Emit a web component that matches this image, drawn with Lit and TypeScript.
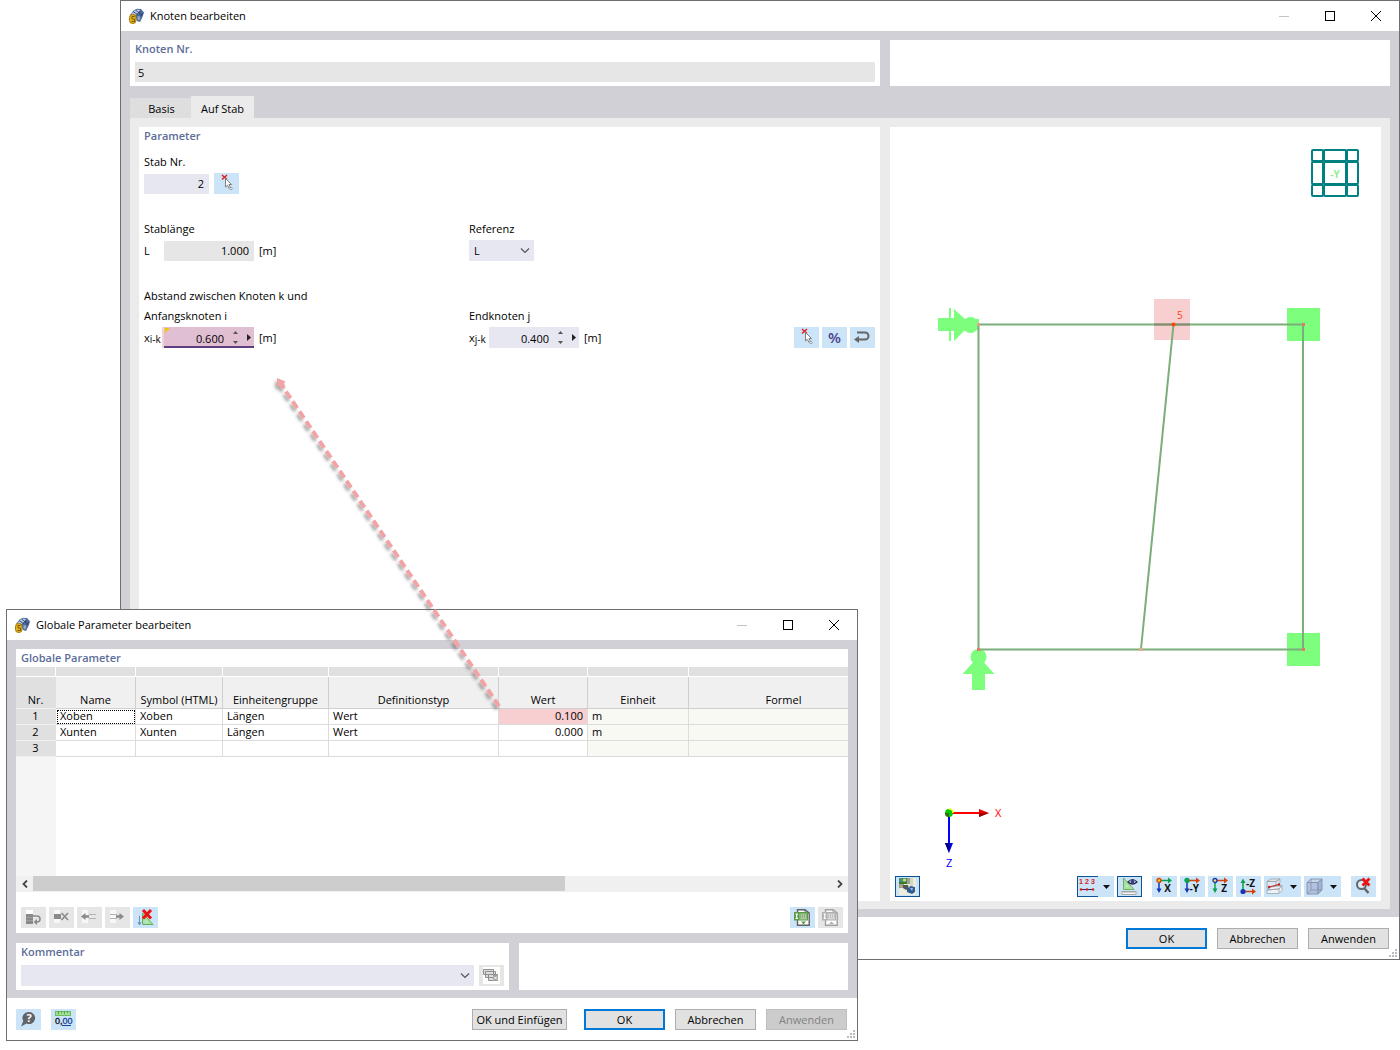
import { LitElement, html, svg, css, TemplateResult } from "lit";
import { customElement, property } from "lit/decorators.js";
import { classMap } from "lit/directives/class-map.js";

const icon = (body: unknown, w = 17, h = 17) =>
  html`<svg class="icon" width=${w} height=${h} viewBox="0 0 ${w} ${h}" overflow="visible" aria-hidden="true">${body}</svg>`;

/* ---------- icons ---------- */

const appIcon = icon(svg`
  <path d="M2 7 L5.500 2.500 L9 .8 L13 1 L16 4.500 L14.500 9 L12 14 L9 13 L7 8z" fill="#4a6a9e"/>
  <path d="M3 6.500 L6.500 2.500 L10 1.500 L12.500 2.500 L8.500 7z" fill="#b4c7e2"/>
  <path d="M5 3.500l4.500 3M7.500 2l4.500 3.500M12.500 2.500l-4 4.500M15 5l-4 5M11 4l3 4" stroke="#2b3f66" stroke-width=".8"/>
  <path d="M9.500 8l3 .5-1 4-2-1z" fill="#8fa9d0"/>
  <rect x="1.500" y="6.500" width="6.500" height="9" rx="3" fill="#e3b21c" stroke="#a87c0c"/>
  <path d="M6.500 8.500H4v2.500h2.500v2.500H3.500" fill="none" stroke="#7a5a08"/>`);

const pickIcon = icon(svg`
  <path d="M4 0l5 4.500M9 0L4 4.500" stroke="#e02020" stroke-width="1.500"/>
  <path d="M7.500 3.500v8.500l2-1.800 1.500 3.300 1.500-.8-1.500-3.200h2.500z" fill="#fff" stroke="#808080"/>
  <circle cx="13" cy="13.500" r="1.200" fill="#fff" stroke="#888" stroke-width=".8"/>`);

const returnIcon = icon(svg`
  <path d="M3 3.500h8a3.500 3.500 0 0 1 0 7H4" fill="none" stroke="#666" stroke-width="2"/>
  <path d="M0 10.500l5-3.500v7z" fill="#666"/>`);

const renderIcon = icon(svg`
  <rect width="17" height="17" fill="#eceedd"/>
  <rect width="8" height="6" fill="#3f8f8a"/><path d="M0 4h8v2H0z" fill="#3d7a24"/><circle cx="5.500" cy="2" r="1.600" fill="#f0d840"/>
  <path d="M8 0h3v6H8zM0 6h5v4H0z" fill="#a0a088"/><path d="M11 0h3v10h-3z" fill="#d2d8c8"/>
  <path d="M4 7h5l1 4-3 1-3-2z" fill="#555"/><path d="M8 9l2 1 1-2 5 1v5l-3 2-5-2z" fill="#2f5c96"/><path d="M11 10h3l-1 3z" fill="#9fc0e6"/>`);

const numberingIcon = icon(svg`
  <text x="0" y="6" font-size="7" font-weight="700" fill="#e02020" font-family="Liberation Sans, sans-serif">1</text>
  <text x="6" y="6" font-size="7" font-weight="700" fill="#e02020" font-family="Liberation Sans, sans-serif">2</text>
  <text x="12" y="6" font-size="7" font-weight="700" fill="#e02020" font-family="Liberation Sans, sans-serif">3</text>
  <path d="M1 11.500h14" stroke="#1c2a6e"/>
  <circle cx="2" cy="11.500" r="1.300" fill="#e02020"/><circle cx="8" cy="11.500" r="1.300" fill="#e02020"/><circle cx="14" cy="11.500" r="1.300" fill="#e02020"/>`);

const visibilityIcon = icon(svg`
  <path d="M2.500 0v11.500H13z" fill="#a8e39c" stroke="#6fae6a"/><path d="M5 6.500v2.500h2.500z" fill="#cbe4f8"/>
  <rect x="1" y="13.500" width="14" height="3" fill="#f4f4f4" stroke="#999" stroke-width=".8"/><path d="M3 13v2M5 13v2M7 13v2M9 13v2M11 13v2M13 13v2" stroke="#999" stroke-width=".8"/>
  <path d="M7 4q4.500-5 9 0q-4.500 4-9 0z" fill="#fff" stroke="#2a2a50" stroke-width="1.200"/><circle cx="11.500" cy="3.800" r="2" fill="#2f3f8a"/>`);

const axisIcon = (label: string, dot: string, right: string, down: string, fill: string) => icon(svg`
  <path d="M4 2.500h9" stroke=${right} stroke-width="1.500"/><path d="M12-.5l4 3-4 3z" fill=${right}/>
  <path d="M3 4v8" stroke=${down} stroke-width="1.500"/><path d="M.5 10.500h5L3 15z" fill=${down}/>
  <circle cx="3" cy="2.500" r="2" fill=${fill} stroke=${dot} stroke-width="1.300"/>
  <text x="15" y="14" text-anchor="end" font-size="10" font-weight="700" fill="#111" font-family="Open Sans, sans-serif">${label}</text>`);

const axisUpIcon = icon(svg`
  <path d="M3 4v8" stroke="#0da050" stroke-width="1.500"/><path d="M.5 5h5L3 .5z" fill="#0da050"/>
  <path d="M5 13.500h8" stroke="#d4410c" stroke-width="1.500"/><path d="M12 10.500l4 3-4 3z" fill="#d4410c"/>
  <circle cx="3" cy="13.500" r="2.600" fill="#1636b8"/>
  <text x="15" y="9" text-anchor="end" font-size="10" font-weight="700" fill="#111" font-family="Open Sans, sans-serif">-Z</text>`);

const sectionIcon = icon(svg`
  <path d="M1 3.500L5 1h9l-4 2.500zM1 3.500h9v4l-9 3zM10 3.500L14 1v4l-4 2.500" fill="#dfe8ef" stroke="#9aa4ad" stroke-width=".8"/>
  <path d="M1 12l4-3 11-1.500-3 3.500zM1 12l12-1v4.500H1zM13 11l3-3.500v5l-3 3" fill="#eef2f5" stroke="#9aa4ad" stroke-width=".8"/>
  <path d="M3 9l10-2.500" stroke="#c02828" stroke-width="1.200"/><circle cx="3" cy="9" r="1.200" fill="#c02828"/><circle cx="13" cy="6.500" r="1.200" fill="#c02828"/>`);

const cubeIcon = icon(svg`
  <path d="M1 4.500L5 1h11l-4 3.500z" fill="#c8d6ea" stroke="#8791a8" stroke-width=".9"/>
  <path d="M1 4.500h11V16H1z" fill="#b1c2e0" stroke="#8791a8" stroke-width=".9"/>
  <path d="M12 4.500L16 1v11l-4 4z" fill="#a2b4d6" stroke="#8791a8" stroke-width=".9"/>
  <path d="M5 1v11h11M5 12l-4 4" fill="none" stroke="#8791a8" stroke-width=".8"/>`);

const resetZoomIcon = icon(svg`
  <circle cx="6.500" cy="6.500" r="4.500" fill="#dcecf8" stroke="#666" stroke-width="2"/>
  <path d="M9.500 10.500l4 4.500" stroke="#666" stroke-width="2.500"/>
  <path d="M7.500.5l7 7M14.500.5l-7 7" stroke="#f01010" stroke-width="2.800"/>`);

const rowReturnIcon = icon(svg`
  <path d="M1 1h7v4H1z" fill="#fff"/><rect x="1" y="5" width="7" height="10" fill="#8a8a8a"/><path d="M1 8.500h7M1 11.500h7" stroke="#9d9d9d"/>
  <path d="M8 7h4a3 3 0 0 1 0 6h-1" fill="none" stroke="#8a8a8a" stroke-width="1.500"/><path d="M12 10v6l-3.500-3z" fill="#8a8a8a"/>`);
const rowDeleteIcon = icon(svg`
  <path d="M1 1h6v13H1z" fill="#f7f7f7"/><rect x="1" y="5" width="7" height="5" fill="#8a8a8a"/><path d="M8.500 4l6.500 7M15 4l-6.500 7" stroke="#8a8a8a" stroke-width="1.600"/>`);
const rowLeftIcon = icon(svg`
  <path d="M1 1h6v13H1z" fill="#f7f7f7"/><path d="M8 5.500h7M8 9.500h7" stroke="#b4b4b4"/><path d="M0 7.500L4.500 4v2.200H8v2.600H4.500V11z" fill="#8a8a8a"/>`);
const rowRightIcon = icon(svg`
  <path d="M1 1h6v13H1z" fill="#f7f7f7"/><path d="M1 5.500h7M1 9.500h7" stroke="#b4b4b4"/><path d="M15 7.500L10.500 4v2.200H7v2.600h3.500V11z" fill="#8a8a8a"/>`);
const deleteParamIcon = icon(svg`
  <path d="M2.500 7v8M1 13l1.500 3L4 13" stroke="#6f8fb8" fill="none"/><path d="M5.500 4v11.500H16z" fill="#a4e79a" stroke="#6cab66"/><path d="M8 11v2.500h3z" fill="#cbe4f8"/>
  <path d="M6 1l8 8.500M14 1L6 9.500" stroke="#ea1212" stroke-width="3"/>`);
const sheetIcon = (dark: string, fill: string, tipPath: string) => icon(svg`
  <path d="M3.500.8H11L15.200 4v12.200H3.500z" fill="#fff" stroke=${dark} stroke-width="1.400"/>
  <path d="M11 1v3h4" fill="none" stroke=${dark}/>
  <rect x="0" y="3" width="14" height="8.500" fill=${fill}/><rect x="5.500" y="4.500" width="7.500" height="6" fill="#fff" opacity=".5"/>
  <path d="M1.500 5h2.500M1.500 9.500h2.500M2.700 5v4.500" stroke="#fff" stroke-width="1.200"/>
  <path d="M6 6h7M6 8h7" stroke=${fill} stroke-dasharray="1 1"/><path d=${tipPath} fill=${fill}/>`);
const cardsIcon = icon(svg`
  <rect width="17" height="17" fill="#fff"/>
  <path d="M.5 2.500h10v5H.5zM2.500 4.500h10v6h-10zM5.500 7.500h9v6h-9z" fill="#dcdcdc" stroke="#8f8f8f"/>
  <rect x="10" y="8" width="5" height="6" fill="#a0a0a0"/><path d="M11 9.500l3 3M14 9.500l-3 3" stroke="#fff"/>`);
const helpIcon = icon(svg`
  <path d="M9 1a6 6 0 1 1-2.500 11.400L1 15.500l2.300-5.500A6 6 0 0 1 9 1z" fill="#606468"/>
  <text x="9" y="11" text-anchor="middle" font-size="11" font-weight="700" fill="#fff" font-family="Open Sans, sans-serif">?</text>`);
const unitsIcon = icon(svg`
  <rect x=".5" y=".5" width="15" height="4" fill="#9ee08c" stroke="#6fb865"/><path d="M3.500 0v3M6.500 0v2M9.500 0v3M12.500 0v2" stroke="#5aa050"/>
  <text x="0" y="13" font-size="9" fill="#111" stroke="#111" stroke-width=".3" font-family="Liberation Sans, sans-serif">0,<tspan fill="#1c3f9c" stroke="#1c3f9c">00</tspan></text>
  <path d="M7 14.500h9" stroke="#1c3f9c"/>`);
const chevron = html`<svg class="chevron" width="10" height="6" viewBox="0 0 10 6" aria-hidden="true"><path d="M1 .5l4 4 4-4" fill="none" stroke="#555" stroke-width="1.200"/></svg>`;
const caret = html`<svg width="7" height="4" viewBox="0 0 7 4" aria-hidden="true"><path d="M0 0h7L3.500 4z" fill="#111"/></svg>`;

/* ---------- window frame ---------- */

@customElement("dialog-window")
class DialogWindow extends LitElement {
  @property() heading = "";

  static styles = css`
    :host { display: flex; flex-direction: column; box-sizing: border-box; border: 1px solid #6e6e70; background: #fff;
      font: 11px/16px "Open Sans", "Noto Sans", sans-serif; color: #000; position: relative; }
    .titlebar { display: flex; align-items: center; height: 30px; flex: none; }
    .icon { margin: 0 5px 0 7px; }
    .title { flex: 1; font-size: 11px; font-weight: 400; margin: 0; }
    .cap { width: 46px; height: 30px; padding: 0; border: 0; background: none; display: grid; place-items: center; }
    .body { flex: 1; background: #d1d0d6; padding: 9px 9px 8px; display: flex; flex-direction: column; }
    .footer { display: flex; align-items: center; gap: 10px; padding: 10px 10px 9px 9px; min-height: 23px; }
    .grip { position: absolute; right: 2px; bottom: 2px; }
  `;

  render() {
    return html`
      <header class="titlebar">
        ${appIcon}
        <h1 class="title">${this.heading}</h1>
        <button class="cap" aria-label="Minimieren" disabled><svg width="10" height="10"><path d="M0 5.500h10" stroke="#c3c3c3"/></svg></button>
        <button class="cap" aria-label="Maximieren"><svg width="10" height="10"><rect x=".5" y=".5" width="9" height="9" fill="none" stroke="#000"/></svg></button>
        <button class="cap" aria-label="Schließen"><svg width="10" height="10"><path d="M0 0l10 10M10 0L0 10" stroke="#000"/></svg></button>
      </header>
      <div class="body"><slot></slot></div>
      <footer class="footer"><slot name="footer"></slot></footer>
      <svg class="grip" width="8" height="8" aria-hidden="true"><path d="M6 0h2v2H6zM3 3h2v2H3zM6 3h2v2H6zM0 6h2v2H0zM3 6h2v2H3zM6 6h2v2H6z" fill="#bcbcbc"/></svg>
    `;
  }
}

interface ParamRow { name: string; symbol: string; group: string; def: string; value: string; unit: string; marked?: boolean; focused?: boolean; }

const rows: ParamRow[] = [
  { name: "Xoben", symbol: "Xoben", group: "Längen", def: "Wert", value: "0.100", unit: "m", marked: true, focused: true },
  { name: "Xunten", symbol: "Xunten", group: "Längen", def: "Wert", value: "0.000", unit: "m" },
  { name: "", symbol: "", group: "", def: "", value: "", unit: "" },
];
const columns = ["Nr.", "Name", "Symbol (HTML)", "Einheitengruppe", "Definitionstyp", "Wert", "Einheit", "Formel"];

@customElement("app-root")
class AppRoot extends LitElement {
  static styles = css`
    :host { display: block; position: relative; min-height: 100vh; background: #fff; overflow: hidden;
      font: 11px/16px "Open Sans", "Noto Sans", sans-serif; color: #000; }
    * { box-sizing: border-box; }
    button, input, select { font: inherit; color: inherit; margin: 0; border: 0; border-radius: 0; padding: 0; }
    h2 { margin: 0; font-size: 11px; line-height: 18px; font-weight: 600; color: #5c6d99; }
    .node-window { margin-left: 120px; min-height: 960px; }
    .param-window { position: absolute; left: 6px; top: 609px; width: 852px; min-height: 432px; }

    .panel { background: #fff; padding: 0 5px; }
    .split { display: grid; grid-template-columns: 3fr 2fr; column-gap: 10px; }
    .number-row .panel { height: 46px; }
    .readonly, .num.readonly { background: #e6e6e6; height: 20px; }
    .full { display: block; width: 100%; margin-top: 4px; padding-left: 3px; }
    .tabs { display: flex; align-items: flex-end; margin-top: 10px; height: 22px; }
    .tab { background: #dedede; height: 20px; padding: 2px 0 0 2px; width: 61px; }
    .tab.active { background: #ebebeb; height: 22px; width: 63px; padding: 4px 0 0; }
    .sheet { flex: 1; background: #ebebeb; padding: 9px 0 8px; }
    .form { margin-left: 9px; }
    .view { margin-right: 9px; background: #fff; display: flex; flex-direction: column; }
    .drawing { flex: 1; width: 100%; min-height: 0; display: block; }

    .pair { display: grid; grid-template-columns: 325px 1fr; }
    .caption { display: block; height: 20px; line-height: 20px; margin-bottom: 1px; }
    .caption.plain { margin-bottom: 0; }
    .group { margin-top: 25px; }
    .group.first { margin-top: 7px; }
    .line { display: flex; align-items: center; height: 21px; }
    .sym { width: 20px; white-space: nowrap; }
    .sub { font-size: 10px; position: relative; top: 1px; }
    .num { text-align: right; background: #e7e7f1; height: 20px; }
    .w65 { width: 65px; padding-right: 5px; }
    .w90 { width: 90px; padding-right: 5px; }
    .unit { margin-left: 5px; }
    .gap5 { margin-left: 5px; }
    .spin { display: flex; width: 90px; height: 21px; background: #e7e7f1; position: relative; }
    .spin .num { flex: 1; min-width: 0; height: auto; padding-top: 2px; background: none; }
    .spin.linked { background: #e0bfd3; box-shadow: inset 0 -2px #5f3f80, -2px 0 #f7d0d2; }
    .flag { position: absolute; left: 1px; top: 1px; }
    .steps { display: flex; flex-direction: column; width: 16px; margin-left: 4px; padding: 1px 1px 1px 0; }
    .step { flex: 1; background: none; display: grid; place-items: center; }
    .expand { width: 10px; background: none; display: grid; place-items: center; }
    .push { margin-left: auto; }
    .choice { position: relative; display: inline-flex; height: 21px; width: 65px; }
    .choice.wide { flex: 1; width: auto; }
    .choice select { appearance: none; width: 100%; background: #e7e7f1; padding: 0 5px; }
    .chevron { position: absolute; right: 4px; top: 8px; pointer-events: none; }

    .tools { display: flex; gap: 3px; }
    .tool { width: 25px; height: 21px; background: #cbe4f8; display: inline-flex; align-items: center; justify-content: center; flex: none; }
    .tool[disabled] { background: #e6e6e6; }
    .tool.on { border: 1px solid #0b5394; background: #cbe4f8; }
    .tool.menu { width: 37px; justify-content: flex-start; padding-left: 2px; gap: 7px; }
    .tool.menu.on { border-width: 0; background: linear-gradient(#0b5394, #0b5394) 0 0 / 21px 1px no-repeat,
      linear-gradient(#0b5394, #0b5394) 0 100% / 21px 1px no-repeat, linear-gradient(#0b5394, #0b5394) 0 0 / 1px 21px no-repeat, #cbe4f8; }
    .percent { font-size: 15px; line-height: 18px; padding-bottom: 2px; font-weight: 600; color: #4a3f8c; }
    .viewbar { padding: 4px 5px; }
    .sp { margin-left: 7px; }

    .btn { width: 81px; height: 21px; border: 1px solid #adadad; background: #e1e1e1; white-space: nowrap; }
    .btn.default { border: 2px solid #0078d7; }
    .btn.long { width: 95px; margin-right: 7px; }
    .btn[disabled] { background: #cccccc; border-color: #bfbfbf; color: #838383; }
    .fixed { display: flex; gap: 10px; margin-right: auto; }

    .grid-panel { background: #fff; display: flex; flex-direction: column; flex: 1; }
    .grid-panel h2, .comment h2 { padding-left: 5px; }
    .scroller { flex: 1; overflow: hidden; background: linear-gradient(#f5f5f5, #f5f5f5) 0 0 / 40px 100% no-repeat; }
    table { border-collapse: separate; border-spacing: 0; table-layout: fixed; width: 863px; }
    th, td { font-weight: 400; padding: 0; white-space: nowrap; overflow: hidden; border-right: 1px solid #dcdcdc; border-bottom: 1px solid #dcdcdc; }
    .c0 { width: 40px; } .c1 { width: 80px; } .c2 { width: 87px; } .c3 { width: 106px; }
    .c4 { width: 170px; } .c5 { width: 89px; } .c6 { width: 101px; } .c7 { width: 190px; }
    .band th { height: 10px; background: #e0e0e0; border-color: #fff; }
    .heads th { height: 32px; background: #f0f0f0; vertical-align: bottom; line-height: 16px; border-color: #cfcfcf; }
    .heads th:first-child { background: #e0e0e0; border-right-color: #e0e0e0; border-bottom-color: #f0f0f0; }
    tbody th, tbody td { height: 16px; line-height: 13px; vertical-align: top; }
    tbody th { background: #e0e0e0; border-right-color: #e0e0e0; border-bottom-color: #f0f0f0; }
    tbody td { padding: 0 4px; background: #fff; }
    td.right { text-align: right; }
    td.tint { background: #f9f9f3; }
    td.marked { background: #f7cfd0; }
    td.focused { outline: 1px dotted #000; outline-offset: -2px; }
    .scrollbar { display: flex; height: 16px; background: #f0f0f0; }
    .scrollbar button { width: 17px; background: none; display: grid; place-items: center; }
    .track { flex: 1; }
    .thumb { width: 66.7%; height: 15px; background: #cdcdcd; }
    .grid-tools { display: flex; justify-content: space-between; padding: 15px 5px 5px; }
    .lower { display: grid; grid-template-columns: 493px 1fr; gap: 10px; margin-top: 10px; height: 47px; }
    .comment { background: #fff; }
    .comment .line { padding: 0 5px; margin-top: 4px; gap: 5px; }
    .link-arrow { position: absolute; left: 260px; top: 365px; pointer-events: none; }
  `;

  private spin(id: string, value: string, linked = false): TemplateResult {
    return html`<span class=${classMap({ spin: true, linked })}>
      ${linked ? html`<svg class="flag" width="5" height="5" aria-hidden="true"><path d="M0 0h5L0 5z" fill="#f0c800"/></svg>` : ""}
      <input class="num" id=${id} .value=${value} />
      <span class="steps">
        <button class="step" aria-label="Erhöhen"><svg width="5" height="3"><path d="M0 3h5L2.500 0z" fill="#555"/></svg></button>
        <button class="step" aria-label="Verringern"><svg width="5" height="3"><path d="M0 0h5L2.500 3z" fill="#555"/></svg></button>
      </span>
      <button class="expand" aria-label="Weitere Optionen"><svg width="4" height="7"><path d="M0 0v7l4-3.500z" fill="#222"/></svg></button>
    </span>`;
  }

  private drawing(): TemplateResult {
    return html`<svg class="drawing" viewBox="890 127 491 745" role="img" aria-label="Modellansicht">
      <g fill="none" stroke="#008080" stroke-width="2">
        <rect x="1312" y="150" width="11" height="11" rx="1"/><rect x="1324" y="150" width="22" height="11" rx="1"/><rect x="1347" y="150" width="11" height="11" rx="1"/>
        <rect x="1312" y="162" width="11" height="22" rx="1"/><rect x="1324" y="162" width="22" height="22" rx="1"/><rect x="1347" y="162" width="11" height="22" rx="1"/>
        <rect x="1312" y="185" width="11" height="11" rx="1"/><rect x="1324" y="185" width="22" height="11" rx="1"/><rect x="1347" y="185" width="11" height="11" rx="1"/>
      </g>
      <text x="1335" y="178" text-anchor="middle" font-size="10" font-weight="700" fill="#90ee90">-Y</text>
      <g fill="#7dff7d">
        <path d="M938 318h16v-9l11 10h14v11h-14l-11 11v-10h-16z"/>
        <circle cx="970.500" cy="325" r="8"/>
        <rect x="1287" y="308" width="33" height="33"/><rect x="1287" y="633" width="33" height="33"/>
        <circle cx="978.500" cy="657" r="8"/>
        <path d="M978.500 657l6 6 10 11h-9.500v16h-13v-16h-9.500l10-11z"/>
      </g>
      <path d="M952.500 308v10M952.500 331v11" stroke="#fff" stroke-width="3"/>
      <path d="M950 308v33" stroke="#7dff7d" stroke-width="2"/>
      <rect x="1154" y="299" width="36" height="41" fill="#f7cfd0"/>
      <g fill="none" stroke="#7aae7a" stroke-width="2">
        <path d="M978.500 324.500H1303v325H978.500z"/><path d="M1173.500 324.500L1141 649"/>
      </g>
      <path d="M1154 324.500h36" stroke="#858a72" stroke-width="2"/>
      <g fill="#e97a6a">
        <rect x="977" y="323" width="3" height="3" fill="#e8a090"/><rect x="1302" y="323" width="3" height="3"/><rect x="1302" y="648" width="3" height="3"/>
        <rect x="977" y="648" width="3" height="3"/><rect x="1139" y="648" width="4" height="3" fill="#dfae88"/>
      </g>
      <circle cx="1173.500" cy="324.500" r="2" fill="#ff4500"/>
      <text x="1177" y="319" font-size="10" fill="#ff4500">5</text>
      <path d="M949 813h31" stroke="#f00" stroke-width="2"/><path d="M979 809l10 4-10 4z" fill="#e80000"/><path d="M979 813h10l-10 4z" fill="#a00000"/>
      <path d="M949 814v30" stroke="#00f" stroke-width="2"/><path d="M945 843h8l-4 10z" fill="#0000d8"/><path d="M945 843h4v10z" fill="#000080"/>
      <circle cx="949" cy="813" r="4" fill="#0c0"/><path d="M949 809a4 4 0 0 1 4 4" fill="none" stroke="#ff0" stroke-width="1.500"/><path d="M945 813a4 4 0 0 0 4 4v-4z" fill="#3a6a10"/>
      <text x="995" y="817" font-size="11" fill="#f00">X</text>
      <text x="946" y="867" font-size="11" fill="#00f">Z</text>
    </svg>`;
  }

  private nodeWindow(): TemplateResult {
    return html`<dialog-window class="node-window" heading="Knoten bearbeiten">
      <div class="split number-row">
        <section class="panel">
          <h2><label for="node-no">Knoten Nr.</label></h2>
          <input class="readonly full" id="node-no" .value=${"5"} readonly />
        </section>
        <section class="panel"></section>
      </div>
      <div class="tabs" role="tablist">
        <button class="tab" role="tab" aria-selected="false">Basis</button>
        <button class="tab active" role="tab" aria-selected="true">Auf Stab</button>
      </div>
      <div class="split sheet">
        <section class="panel form">
          <h2>Parameter</h2>
          <div class="group first">
            <label class="caption" for="member">Stab Nr.</label>
            <div class="line">
              <input class="num w65" id="member" .value=${"2"} />
              <button class="tool gap5" aria-label="Stab auswählen">${pickIcon}</button>
            </div>
          </div>
          <div class="group pair">
            <div>
              <label class="caption" for="length">Stablänge</label>
              <div class="line"><span class="sym">L</span><input class="num readonly w90" id="length" .value=${"1.000"} readonly /><span class="unit">[m]</span></div>
            </div>
            <div>
              <label class="caption" for="reference">Referenz</label>
              <span class="choice"><select id="reference"><option>L</option></select>${chevron}</span>
            </div>
          </div>
          <div class="group">
            <span class="caption plain">Abstand zwischen Knoten k und</span>
            <div class="pair">
              <div>
                <label class="caption" for="start">Anfangsknoten i</label>
                <div class="line"><span class="sym">x<span class="sub">i-k</span></span>${this.spin("start", "0.600", true)}<span class="unit">[m]</span></div>
              </div>
              <div>
                <label class="caption" for="end">Endknoten j</label>
                <div class="line">
                  <span class="sym">x<span class="sub">j-k</span></span>${this.spin("end", "0.400")}<span class="unit">[m]</span>
                  <div class="tools push">
                    <button class="tool" aria-label="Knoten auswählen">${pickIcon}</button>
                    <button class="tool percent">%</button>
                    <button class="tool" aria-label="Umkehren">${returnIcon}</button>
                  </div>
                </div>
              </div>
            </div>
          </div>
        </section>
        <section class="view">
          ${this.drawing()}
          <div class="tools viewbar">
            <button class="tool on" aria-label="Darstellung">${renderIcon}</button>
            <button class="tool menu on push" aria-label="Nummerierung">${numberingIcon}${caret}</button>
            <button class="tool on" aria-label="Sichtbarkeit">${visibilityIcon}</button>
            <button class="tool sp" aria-label="Ansicht X">${axisIcon("X", "#d4410c", "#0da050", "#1636b8", "#f8d020")}</button>
            <button class="tool" aria-label="Ansicht -Y">${axisIcon("-Y", "#0da050", "#d4410c", "#1636b8", "#0da050")}</button>
            <button class="tool" aria-label="Ansicht Z">${axisIcon("Z", "#1636b8", "#d4410c", "#0da050", "#f8e060")}</button>
            <button class="tool" aria-label="Ansicht -Z">${axisUpIcon}</button>
            <button class="tool menu" aria-label="Schnitt">${sectionIcon}${caret}</button>
            <button class="tool menu" aria-label="Perspektive">${cubeIcon}${caret}</button>
            <button class="tool sp" aria-label="Zoom zurücksetzen">${resetZoomIcon}</button>
          </div>
        </section>
      </div>
      <button slot="footer" class="btn default push">OK</button>
      <button slot="footer" class="btn">Abbrechen</button>
      <button slot="footer" class="btn">Anwenden</button>
    </dialog-window>`;
  }

  private paramWindow(): TemplateResult {
    return html`<dialog-window class="param-window" heading="Globale Parameter bearbeiten">
      <section class="grid-panel">
        <h2>Globale Parameter</h2>
        <div class="scroller">
          <table>
            <colgroup>${columns.map((_, i) => html`<col class="c${i}" />`)}</colgroup>
            <thead>
              <tr class="band">${columns.map(() => html`<th></th>`)}</tr>
              <tr class="heads">${columns.map((c) => html`<th scope="col">${c}</th>`)}</tr>
            </thead>
            <tbody>
              ${rows.map((r, i) => html`<tr>
                <th scope="row">${i + 1}</th>
                <td class=${classMap({ focused: !!r.focused })}>${r.name}</td>
                <td>${r.symbol}</td><td>${r.group}</td><td>${r.def}</td>
                <td class=${classMap({ right: true, marked: !!r.marked })}>${r.value}</td>
                <td class="tint">${r.unit}</td><td class="tint"></td>
              </tr>`)}
            </tbody>
          </table>
        </div>
        <div class="scrollbar">
          <button aria-label="Nach links"><svg width="6" height="8"><path d="M5 .5L1.500 4 5 7.500" fill="none" stroke="#444" stroke-width="1.800"/></svg></button>
          <div class="track"><div class="thumb"></div></div>
          <button aria-label="Nach rechts"><svg width="6" height="8"><path d="M1 .5L4.500 4 1 7.500" fill="none" stroke="#444" stroke-width="1.800"/></svg></button>
        </div>
        <div class="grid-tools">
          <div class="tools">
            <button class="tool" disabled aria-label="Zeile einfügen">${rowReturnIcon}</button>
            <button class="tool" disabled aria-label="Zeile löschen">${rowDeleteIcon}</button>
            <button class="tool" disabled aria-label="Nach links">${rowLeftIcon}</button>
            <button class="tool" disabled aria-label="Nach rechts">${rowRightIcon}</button>
            <button class="tool" aria-label="Alle löschen">${deleteParamIcon}</button>
          </div>
          <div class="tools">
            <button class="tool" aria-label="Importieren">${sheetIcon("#606060", "#5d9a48", "M7 12.500h5l-2.500 3z")}</button>
            <button class="tool" disabled aria-label="Exportieren">${sheetIcon("#a0a0a0", "#b0b0b0", "M7 15h5l-2.500-2.500z")}</button>
          </div>
        </div>
      </section>
      <div class="lower">
        <section class="comment">
          <h2><label for="comment">Kommentar</label></h2>
          <div class="line">
            <span class="choice wide"><select id="comment"><option></option></select>${chevron}</span>
            <button class="tool" disabled aria-label="Vorlagen">${cardsIcon}</button>
          </div>
        </section>
        <section class="comment"></section>
      </div>
      <div slot="footer" class="fixed">
        <button class="tool" aria-label="Hilfe">${helpIcon}</button>
        <button class="tool" aria-label="Einheiten">${unitsIcon}</button>
      </div>
      <button slot="footer" class="btn long">OK und Einfügen</button>
      <button slot="footer" class="btn default">OK</button>
      <button slot="footer" class="btn">Abbrechen</button>
      <button slot="footer" class="btn" disabled>Anwenden</button>
    </dialog-window>`;
  }

  render() {
    return html`
      ${this.nodeWindow()} ${this.paramWindow()}
      <svg class="link-arrow" width="260" height="360" viewBox="260 365 260 360" aria-hidden="true">
        <defs><filter id="soft" x="-10%" y="-10%" width="120%" height="120%"><feDropShadow dx="-2" dy="3" stdDeviation="1.500" flood-color="#555" flood-opacity=".5"/></filter></defs>
        <g filter="url(#soft)">
          <path d="M286 391.500L501 709" stroke="#f2a3a6" stroke-width="4" stroke-dasharray="8 4"/>
          <path d="M277 378l8.500 3.500-1.500 2 1.500 4-3 2-3.500-4-2 1z" fill="#f2a3a6"/>
        </g>
      </svg>`;
  }
}
